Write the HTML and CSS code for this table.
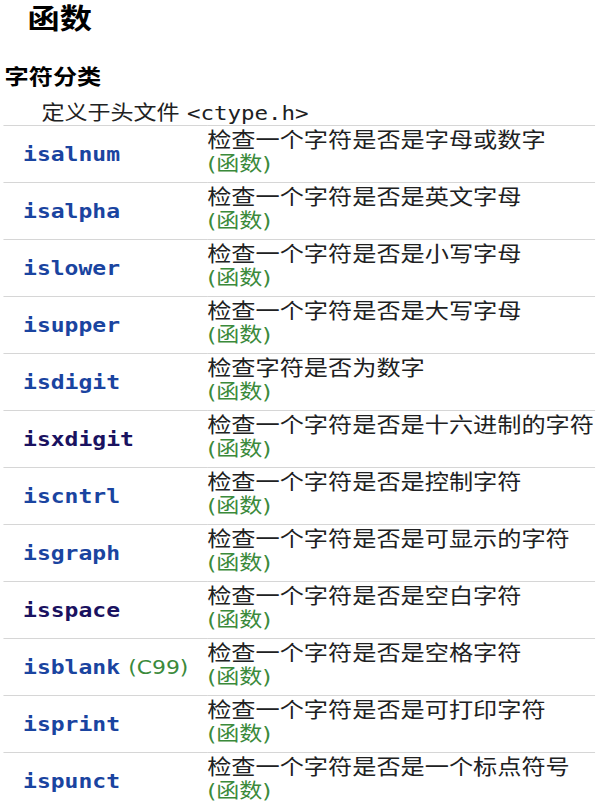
FILE: index.html
```html
<!DOCTYPE html>
<html lang="zh">
<head>
<meta charset="utf-8">
<title>函数</title>
<link rel="stylesheet" href="styles.css">
</head>
<body>
<div class="page">
  <h1 class="title">函数</h1>
  <h3 class="section">字符分类</h3>
  <div class="header-def">定义于头文件 <code class="hdr">&lt;ctype.h&gt;</code></div>
  <table class="funcs">
    <tbody>
      <tr><td class="name"><a class="fn">isalnum</a></td><td class="desc"><div>检查一个字符是否是字母或数字</div><div class="mark">(函数)</div></td></tr>
      <tr><td class="name"><a class="fn">isalpha</a></td><td class="desc"><div>检查一个字符是否是英文字母</div><div class="mark">(函数)</div></td></tr>
      <tr><td class="name"><a class="fn">islower</a></td><td class="desc"><div>检查一个字符是否是小写字母</div><div class="mark">(函数)</div></td></tr>
      <tr><td class="name"><a class="fn">isupper</a></td><td class="desc"><div>检查一个字符是否是大写字母</div><div class="mark">(函数)</div></td></tr>
      <tr><td class="name"><a class="fn">isdigit</a></td><td class="desc"><div>检查字符是否为数字</div><div class="mark">(函数)</div></td></tr>
      <tr><td class="name"><a class="fn visited">isxdigit</a></td><td class="desc"><div>检查一个字符是否是十六进制的字符</div><div class="mark">(函数)</div></td></tr>
      <tr><td class="name"><a class="fn">iscntrl</a></td><td class="desc"><div>检查一个字符是否是控制字符</div><div class="mark">(函数)</div></td></tr>
      <tr><td class="name"><a class="fn">isgraph</a></td><td class="desc"><div>检查一个字符是否是可显示的字符</div><div class="mark">(函数)</div></td></tr>
      <tr><td class="name"><a class="fn visited">isspace</a></td><td class="desc"><div>检查一个字符是否是空白字符</div><div class="mark">(函数)</div></td></tr>
      <tr><td class="name"><a class="fn">isblank</a> <span class="rev">(C99)</span></td><td class="desc"><div>检查一个字符是否是空格字符</div><div class="mark">(函数)</div></td></tr>
      <tr><td class="name"><a class="fn">isprint</a></td><td class="desc"><div>检查一个字符是否是可打印字符</div><div class="mark">(函数)</div></td></tr>
      <tr><td class="name"><a class="fn">ispunct</a></td><td class="desc"><div>检查一个字符是否是一个标点符号</div><div class="mark">(函数)</div></td></tr>
    </tbody>
  </table>
</div>
</body>
</html>
```

FILE: styles.css
```css
html, body {
  margin: 0;
  padding: 0;
  background: #ffffff;
}

body {
  font-family: "DejaVu Sans", "Noto Sans CJK SC", sans-serif;
  color: #202122;
  overflow: hidden;
}

.page {
  width: 523px;
  transform: scaleX(1.151);
  transform-origin: 0 0;
}

.title {
  margin: 0;
  padding-left: 24px;
  font-size: 28px;
  line-height: 40px;
  font-weight: bold;
  color: #000000;
}

.section {
  margin: 23px 0 0 0;
  padding-left: 4px;
  font-size: 21px;
  line-height: 28px;
  font-weight: bold;
  color: #000000;
}

.header-def {
  margin-top: 11px;
  padding-left: 36px;
  font-size: 20px;
  line-height: 22px;
  color: #202122;
}

.hdr {
  font-family: "DejaVu Sans Mono", monospace;
  font-size: 19.5px;
}

.funcs {
  margin-left: 3px;
  width: 514px;
  border-collapse: collapse;
}

.funcs td {
  border-top: 1px solid #d6d6d6;
  padding: 0;
}

.name {
  width: 160px;
  padding-left: 17px !important;
  vertical-align: middle;
  white-space: nowrap;
  height: 56px;
}

.fn {
  font-family: "DejaVu Sans Mono", monospace;
  font-weight: bold;
  font-size: 20px;
  color: #1a44a0;
  text-decoration: none;
}

.fn.visited {
  color: #1a1260;
}

.rev {
  margin-left: 2px;
  font-size: 19px;
  color: #3b8a3b;
}

.desc {
  vertical-align: top;
  padding-top: 2px !important;
  padding-bottom: 6px !important;
  font-size: 21px;
  line-height: 24px;
  white-space: nowrap;
}

.mark {
  font-size: 20px;
  color: #3b8a3b;
}
```
